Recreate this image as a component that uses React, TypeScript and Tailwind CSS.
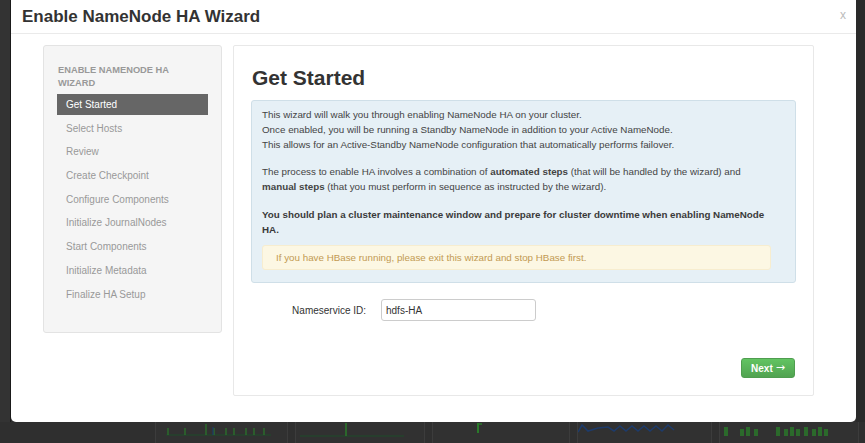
import React from 'react'

const steps = [
  'Get Started',
  'Select Hosts',
  'Review',
  'Create Checkpoint',
  'Configure Components',
  'Initialize JournalNodes',
  'Start Components',
  'Initialize Metadata',
  'Finalize HA Setup',
]

function Sidebar() {
  return (
    <div className="w-[179px] h-[288px] shrink-0 bg-[#f5f5f5] border border-[#e3e3e3] rounded-[3px] pt-[18px] px-[13px]">
      <div className="pl-[1px] text-[9.3px] leading-[13px] font-bold text-[#999] uppercase">
        Enable NameNode HA
        <br />
        Wizard
      </div>
      <div className="mt-[4px] flex flex-col gap-[2.7px]">
        {steps.map((s, i) => (
          <div
            key={s}
            className={
              i === 0
                ? 'h-[21px] flex items-center pl-[9px] bg-[#666] text-white text-[10px]'
                : 'h-[21px] flex items-center pl-[9px] text-[#999] text-[10px]'
            }
          >
            {s}
          </div>
        ))}
      </div>
    </div>
  )
}

function Content() {
  return (
    <div className="w-[581px] h-[351px] shrink-0 bg-white border border-[#e8e8e8] rounded-[2px] pt-[20px] px-[17px]">
      <h2 className="text-[21px] leading-[24px] font-bold text-[#333] pl-[1px]">Get Started</h2>

      {/* info box */}
      <div className="mt-[10px] bg-[#e6f0f6] border border-[#cfdfe8] rounded-[3px] pt-[6px] pb-[12px] pl-[10px] pr-[8px] text-[9.8px] leading-[15px] text-[#444]">
        <p>
          This wizard will walk you through enabling NameNode HA on your cluster.
          <br />
          Once enabled, you will be running a Standby NameNode in addition to your Active NameNode.
          <br />
          This allows for an Active-Standby NameNode configuration that automatically performs failover.
        </p>
        <p className="mt-[12px]">
          The process to enable HA involves a combination of <b>automated steps</b> (that will be handled by the
          wizard) and
          <br />
          <b>manual steps</b> (that you must perform in sequence as instructed by the wizard).
        </p>
        <p className="mt-[13px] font-bold text-[#3a3a3a]">
          You should plan a cluster maintenance window and prepare for cluster downtime when enabling NameNode
          <br />
          HA.
        </p>
        <div className="mt-[8px] mr-[16px] h-[25px] flex items-center pl-[13px] bg-[#fcf7e3] border border-[#f7edcf] rounded-[3px] text-[#c29a52]">
          If you have HBase running, please exit this wizard and stop HBase first.
        </div>
      </div>

      {/* form */}
      <div className="mt-[16px] flex items-center">
        <label className="w-[115px] text-right text-[10px] text-[#333]">Nameservice ID:</label>
        <div className="ml-[15px] w-[155px] h-[22px] flex items-center pl-[4px] border border-[#ccc] rounded-[3px] text-[10px] text-[#333] bg-white">
          hdfs-HA
        </div>
      </div>

      <div className="mt-[37px] flex justify-end pr-[1px]">
        <button className="w-[54px] h-[20px] flex items-center justify-center gap-[3px] rounded-[3px] border border-[#4f9d4f] bg-gradient-to-b from-[#62c462] to-[#51a351] text-white text-[10px] font-bold">
          Next
          <span className="font-normal text-[11px]" style={{ fontFamily: '"DejaVu Sans", sans-serif' }}>
            →
          </span>
        </button>
      </div>
    </div>
  )
}

function BgCharts() {
  return (
    <div className="h-[21px] flex pl-[155px] gap-[7px]">
      <div className="w-[133px] h-full border-x border-[#3c3c3c] bg-[#313131]">
        <svg width="133" height="21" viewBox="0 0 133 21">
          <line x1="10" y1="13" x2="115" y2="13" stroke="#1f4d2a" strokeWidth="1" />
          {[12, 29, 50, 58, 70, 78, 90, 98, 108].map((x) => (
            <line key={x} x1={x} y1={x === 50 ? 2 : 6} x2={x} y2="13" stroke="#2a7a2a" strokeWidth="1.2" />
          ))}
          <line x1="57" y1="5" x2="57" y2="13" stroke="#1d3b6b" strokeWidth="1.2" />
        </svg>
      </div>
      <div className="w-[130px] h-full border-x border-[#3c3c3c] bg-[#313131]">
        <svg width="130" height="21" viewBox="0 0 130 21">
          <line x1="4" y1="14" x2="108" y2="14" stroke="#1f4d2a" strokeWidth="1" />
          <line x1="50" y1="1" x2="50" y2="14" stroke="#2a7a2a" strokeWidth="1.5" />
        </svg>
      </div>
      <div className="w-[138px] h-full border-x border-[#3c3c3c] bg-[#313131]">
        <svg width="138" height="21" viewBox="0 0 138 21">
          <line x1="45" y1="1" x2="45" y2="11" stroke="#2a7a2a" strokeWidth="2" />
          <line x1="45" y1="2" x2="49" y2="2" stroke="#2a7a2a" strokeWidth="1.5" />
        </svg>
      </div>
      <div className="w-[135px] h-full border-x border-[#3c3c3c] bg-[#313131]">
        <svg width="135" height="21" viewBox="0 0 135 21">
          <polyline
            points="0,10 4,3 10,9 20,6 30,5 36,9 42,4 48,9 54,4 60,9 66,4 72,9 78,4 84,9 90,3 96,8"
            fill="none"
            stroke="#1d3b6b"
            strokeWidth="1.6"
          />
        </svg>
      </div>
      <div className="w-[140px] h-full border-x border-[#3c3c3c] bg-[#313131]">
        <svg width="140" height="21" viewBox="0 0 140 21">
          {[4, 20, 26, 34, 56, 64, 70, 76, 84, 92, 98, 104].map((x, i) => (
            <rect key={x} x={x} y={i % 2 ? 7 : 5} width="4" height={i % 2 ? 7 : 9} fill="#2b6a2b" />
          ))}
        </svg>
      </div>
    </div>
  )
}

export default function App() {
  return (
    <div
      className="w-[865px] h-[443px] bg-[#2f2f2f] overflow-hidden flex flex-col"
      style={{ fontFamily: '"Liberation Sans", Arial, sans-serif' }}
    >
      <div className="flex h-[422px]">
        <div className="w-[11px] shrink-0 bg-[#333] border-r border-[#1a1a1a]" />
        <div className="w-[845px] shrink-0 bg-white rounded-b-[5px] flex flex-col">
          {/* header */}
          <div className="h-[34px] shrink-0 flex items-center justify-between pl-[11px] pr-[10px] border-b border-[#eaeaea]">
            <h1 className="text-[17px] font-bold text-[#333]">Enable NameNode HA Wizard</h1>
            <span className="text-[12px] text-[#bbb] -mt-[3px]">x</span>
          </div>
          {/* body */}
          <div className="flex pl-[32px] pt-[11px] gap-[11px]">
            <Sidebar />
            <Content />
          </div>
        </div>
        <div className="flex-1 bg-[#2a2a2a]" />
      </div>
      <BgCharts />
    </div>
  )
}
